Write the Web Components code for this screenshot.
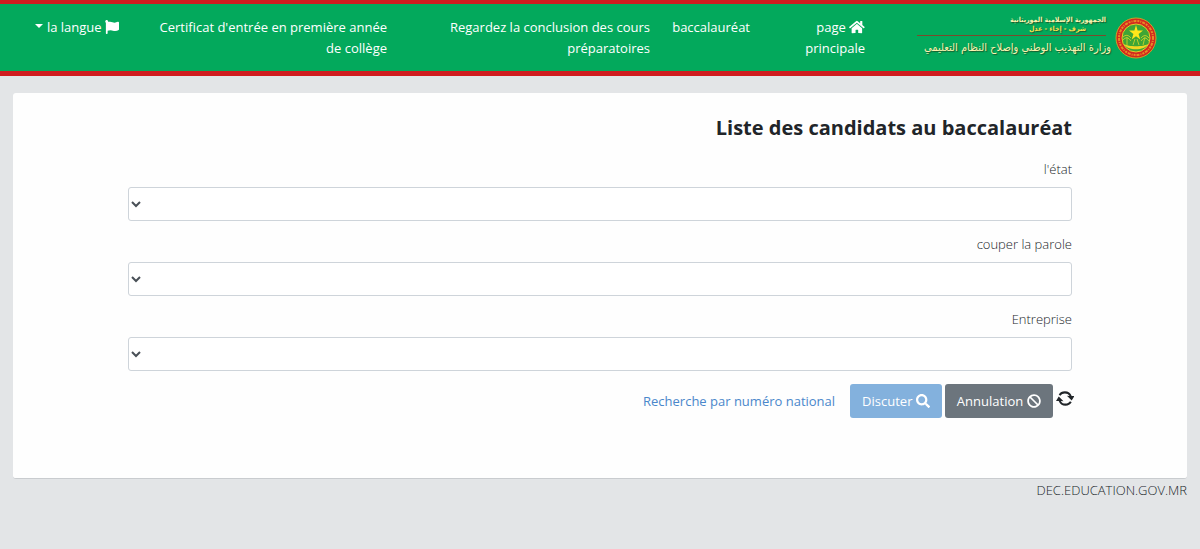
<!DOCTYPE html>
<html lang="fr" dir="rtl">
<head>
  <meta charset="utf-8">
  <meta name="viewport" content="width=device-width, initial-scale=1">
  <title>Liste des candidats au baccalauréat</title>
  <style>
    body {
      background: #e3e5e7;
      color: #212529;
      font-family: "Open Sans", "Noto Sans", sans-serif;
      font-size: 13px;
      line-height: 21px;
      margin: 0;
    }
  </style>
</head>
<body>
  <site-header>
    <ministry-logo slot="brand"></ministry-logo>
    <nav-link href="#accueil">page <ui-icon name="home"></ui-icon> principale</nav-link>
    <nav-link href="#bac">baccalauréat</nav-link>
    <nav-link href="#concours">Regardez la conclusion des cours préparatoires</nav-link>
    <nav-link href="#certificat">Certificat d'entrée en première année de collège</nav-link>
    <nav-link href="#langue" dropdown><ui-icon name="flag"></ui-icon> la langue</nav-link>
  </site-header>

  <page-card>
    <span slot="title">Liste des candidats au baccalauréat</span>
    <select-field label="l'état"></select-field>
    <select-field label="couper la parole"></select-field>
    <select-field label="Entreprise"></select-field>
    <form-actions></form-actions>
  </page-card>

  <site-footer>DEC.EDUCATION.GOV.MR</site-footer>

  <script>
    const icons = {
      home: ['0 0 576 512', 'M280.37 148.26L96 300.11V464a16 16 0 0 0 16 16l112.06-.29a16 16 0 0 0 15.92-16V368a16 16 0 0 1 16-16h64a16 16 0 0 1 16 16v95.64a16 16 0 0 0 16 16.05L464 480a16 16 0 0 0 16-16V300L295.67 148.26a12.19 12.19 0 0 0-15.3 0zM571.6 251.47L488 182.56V44.05a12 12 0 0 0-12-12h-56a12 12 0 0 0-12 12v72.61L318.47 43a48 48 0 0 0-61 0L4.34 251.47a12 12 0 0 0-1.6 16.9l25.5 31A12 12 0 0 0 45.15 301l235.22-193.74a12.19 12.19 0 0 1 15.3 0L530.9 301a12 12 0 0 0 16.9-1.6l25.5-31a12 12 0 0 0-1.7-16.93z'],
      flag: ['0 0 512 512', 'M349.565 98.783C295.978 98.783 251.721 64 184.348 64c-24.955 0-47.309 4.384-68.045 12.013a55.947 55.947 0 0 0 3.586-23.562C118.117 24.015 94.806 1.206 66.338.048 34.345-1.254 8 24.296 8 56c0 19.026 9.497 35.825 24 45.945V488c0 13.255 10.745 24 24 24h16c13.255 0 24-10.745 24-24v-94.4c28.311-12.064 63.582-22.122 114.435-22.122 53.588 0 97.844 34.783 165.217 34.783 48.169 0 86.667-16.294 122.505-40.858C506.84 359.452 512 349.571 512 339.045v-243.1c0-23.393-24.269-38.87-45.485-29.016-34.338 15.948-76.454 31.854-116.95 31.854z'],
      search: ['0 0 512 512', 'M505 442.7L405.3 343c-4.5-4.5-10.6-7-17-7H372c27.6-35.3 44-79.7 44-128C416 93.1 322.9 0 208 0S0 93.1 0 208s93.1 208 208 208c48.3 0 92.7-16.4 128-44v16.3c0 6.4 2.5 12.5 7 17l99.7 99.7c9.4 9.4 24.6 9.4 33.9 0l28.3-28.3c9.4-9.4 9.4-24.6.1-34zM208 336c-70.7 0-128-57.2-128-128 0-70.7 57.2-128 128-128 70.7 0 128 57.2 128 128 0 70.7-57.2 128-128 128z'],
      ban: ['0 0 512 512', 'M256 8C119.034 8 8 119.033 8 256s111.034 248 248 248 248-111.034 248-248S392.967 8 256 8zm130.108 117.892c65.448 65.448 70 165.481 20.677 235.637L150.47 105.216c70.204-49.356 170.226-44.735 235.638 20.676zM125.892 386.108c-65.448-65.448-70-165.481-20.677-235.637L361.53 406.784c-70.203 49.356-170.226 44.736-235.638-20.676z'],
      // two arcs, arrow heads tilted at the outer sides
      refresh: ['0 0 54 44', 'M0 29L8 16L22 30L14 29C17 35 22 37 28 37C33 37 38 35 41 30L46 33C42 40 36 43 28 43C18 43 11 38 8 29ZM54 15L46 28L32 14L40 15C37 9 32 7 26 7C21 7 16 9 13 14L8 11C12 4 18 1 26 1C36 1 43 6 46 15Z']
    };

    class UiIcon extends HTMLElement {
      connectedCallback() {
        const [viewBox, path] = icons[this.getAttribute('name')];
        const shadow = this.shadowRoot || this.attachShadow({ mode: 'open' });

        shadow.innerHTML = `
          <style>
            :host {
              display: inline-block;
              line-height: 1;
              vertical-align: -2px;
            }

            svg {
              display: block;
              fill: currentColor;
              height: var(--icon-size, 14px);
              width: auto;
            }
          </style>
          <svg viewBox="${viewBox}" aria-hidden="true"><path d="${path}"/></svg>
        `;
      }
    }

    customElements.define('ui-icon', UiIcon);

    const logoTemplate = document.createElement('template');

    logoTemplate.innerHTML = `
      <style>
        :host {
          display: block;
        }

        a {
          align-items: center;
          color: #fbf3b0;
          display: flex;
          font-family: "DejaVu Sans Condensed", "DejaVu Sans", sans-serif;
          gap: 4px;
          text-decoration: none;
          text-shadow: 1px 1px 1px #1c5a2c;
          white-space: nowrap;
        }

        .emblem {
          flex: none;
          height: 42px;
          width: 42px;
        }

        .names {
          display: grid;
          flex: 1;
          text-align: start;
        }

        .state,
        .motto {
          font-size: 7px;
          font-weight: bold;
        }

        .state {
          line-height: 10px;
          padding-inline-start: 5px;
        }

        .motto {
          border-bottom: 1px solid #7b4a2c;
          color: #f3e04e;
          line-height: 9px;
          margin-inline-start: 5px;
          padding-bottom: 1px;
          padding-inline-start: 20px;
        }

        .ministry {
          font-size: 11px;
          line-height: 24px;
        }
      </style>

      <a href="#ministere">
        <svg class="emblem" viewBox="0 0 42 42" aria-hidden="true">
          <circle cx="21" cy="21" r="20" fill="#d3281f" stroke="#c9a227" stroke-width="1"/>
          <circle cx="21" cy="21" r="17" fill="none" stroke="#e88a25" stroke-width="2" stroke-dasharray="2 1 1 1 3 1"/>
          <circle cx="21" cy="21" r="14" fill="#3fa535" stroke="#e8c62a" stroke-width="1"/>
          <path d="M9 27C12 34 30 34 33 27C29 30 13 30 9 27Z" fill="#f2d622"/>
          <path d="M12 28V20M8 20Q12 16 16 21M8 23Q12 18 16 24M28 28L30 20M26 21Q30 16 34 21M26 24Q30 18 34 24M18 28L20 22M24 28L22 22" fill="none" stroke="#b9cc2c" stroke-width="1"/>
          <path d="M21 8L22.600 13.600H28L23.600 17L25.300 22.500L21 19.200L16.700 22.500L18.400 17L14 13.600H19.400Z" fill="#ffe81a"/>
        </svg>
        <span class="names">
          <span class="state">الجمهورية الإسلامية الموريتانية</span>
          <span class="motto">شرف - إخاء - عدل</span>
          <span class="ministry">وزارة التهذيب الوطني وإصلاح النظام التعليمي</span>
        </span>
      </a>
    `;

    class MinistryLogo extends HTMLElement {
      constructor() {
        super();

        this.attachShadow({ mode: 'open' });
        this.shadowRoot.appendChild(logoTemplate.content.cloneNode(true));
      }
    }

    customElements.define('ministry-logo', MinistryLogo);

    const headerTemplate = document.createElement('template');

    headerTemplate.innerHTML = `
      <style>
        :host {
          background: #03a95c;
          border-bottom: 5px solid #d01c1f;
          border-top: 4px solid #d01c1f;
          display: block;
        }

        .bar {
          align-items: start;
          display: flex;
          gap: 52px;
          padding: 11px 43px 11px 32px;
        }

        .brand {
          flex: none;
          width: 240px;
        }

        nav {
          display: grid;
          flex: 1;
          gap: 20px;
          grid-template-columns: 95fr 80fr 243fr 248fr 87fr;
          padding-top: 2px;
        }
      </style>

      <header class="bar">
        <div class="brand"><slot name="brand"></slot></div>
        <nav><slot></slot></nav>
      </header>
    `;

    class SiteHeader extends HTMLElement {
      constructor() {
        super();

        this.attachShadow({ mode: 'open' });
        this.shadowRoot.appendChild(headerTemplate.content.cloneNode(true));
      }
    }

    customElements.define('site-header', SiteHeader);

    const navLinkTemplate = document.createElement('template');

    navLinkTemplate.innerHTML = `
      <style>
        :host {
          display: block;
          max-width: 240px;
          min-width: 0;
        }

        a {
          color: #ffffff;
          display: block;
          text-decoration: none;
        }

        a:hover {
          text-decoration: underline;
        }

        :host([dropdown]) a {
          white-space: nowrap;
        }

        :host([dropdown]) a::after {
          border: 4px solid transparent;
          border-bottom: 0;
          border-top-color: currentColor;
          content: "";
          display: inline-block;
          margin-inline-start: 4px;
          vertical-align: 4px;
        }
      </style>

      <a><slot></slot></a>
    `;

    class NavLink extends HTMLElement {
      constructor() {
        super();

        this.attachShadow({ mode: 'open' });
        this.shadowRoot.appendChild(navLinkTemplate.content.cloneNode(true));
        this.link = this.shadowRoot.querySelector('a');
      }

      connectedCallback() {
        this.link.href = this.getAttribute('href');
      }
    }

    customElements.define('nav-link', NavLink);

    const cardTemplate = document.createElement('template');

    cardTemplate.innerHTML = `
      <style>
        :host {
          background: #fefefe;
          border-bottom: 1px solid #c9cccf;
          border-radius: 3px;
          display: block;
          margin: 17px 13px 0;
          padding: 21px calc(100% / 12 + 15px) 60px;
        }

        h1 {
          font-size: 20px;
          font-weight: bold;
          line-height: 28px;
          margin: 0 0 17px;
        }
      </style>

      <h1><slot name="title"></slot></h1>
      <slot></slot>
    `;

    class PageCard extends HTMLElement {
      constructor() {
        super();

        this.attachShadow({ mode: 'open' });
        this.shadowRoot.appendChild(cardTemplate.content.cloneNode(true));
      }
    }

    customElements.define('page-card', PageCard);

    const fieldTemplate = document.createElement('template');

    fieldTemplate.innerHTML = `
      <style>
        :host {
          display: block;
          margin-bottom: 13px;
        }

        label {
          display: block;
          font-weight: 300;
          margin-bottom: 7px;
        }

        select {
          background: #ffffff;
          border: 1px solid #ced4da;
          border-radius: 3px;
          box-sizing: border-box;
          color: #495057;
          direction: rtl;
          display: block;
          font: inherit;
          height: 34px;
          width: 100%;
        }
      </style>

      <label for="choice"></label>
      <select id="choice"><option value=""></option></select>
    `;

    class SelectField extends HTMLElement {
      constructor() {
        super();

        this.attachShadow({ mode: 'open' });
        this.shadowRoot.appendChild(fieldTemplate.content.cloneNode(true));
        this.label = this.shadowRoot.querySelector('label');
      }

      connectedCallback() {
        this.label.textContent = this.getAttribute('label');
      }
    }

    customElements.define('select-field', SelectField);

    const actionsTemplate = document.createElement('template');

    actionsTemplate.innerHTML = `
      <style>
        :host {
          align-items: center;
          display: flex;
          gap: 3px;
        }

        button {
          border: 0;
          border-radius: 3px;
          color: #ffffff;
          cursor: pointer;
          font: inherit;
          height: 34px;
          padding: 0 12px;
          white-space: nowrap;
        }

        .refresh {
          --icon-size: 15px;
          background: none;
          color: #212529;
          margin-inline-start: -2px;
          padding: 0 0 4px;
        }

        .cancel {
          background: #6c757d;
        }

        .search {
          background: #83b1dd;
        }

        a {
          color: #4a87cb;
          margin-inline-start: 12px;
          text-decoration: none;
        }
      </style>

      <button class="refresh" type="button" aria-label="Actualiser"><ui-icon name="refresh"></ui-icon></button>
      <button class="cancel" type="button"><ui-icon name="ban"></ui-icon> Annulation</button>
      <button class="search" type="button"><ui-icon name="search"></ui-icon> Discuter</button>
      <a href="#numero">Recherche par numéro national</a>
    `;

    class FormActions extends HTMLElement {
      constructor() {
        super();

        this.attachShadow({ mode: 'open' });
        this.shadowRoot.appendChild(actionsTemplate.content.cloneNode(true));
      }
    }

    customElements.define('form-actions', FormActions);

    class SiteFooter extends HTMLElement {
      constructor() {
        super();

        this.attachShadow({ mode: 'open' });
        this.shadowRoot.innerHTML = `
          <style>
            :host {
              display: block;
              font-weight: 300;
              padding: 1px 13px;
            }
          </style>
          <footer><slot></slot></footer>
        `;
      }
    }

    customElements.define('site-footer', SiteFooter);
  </script>
</body>
</html>
